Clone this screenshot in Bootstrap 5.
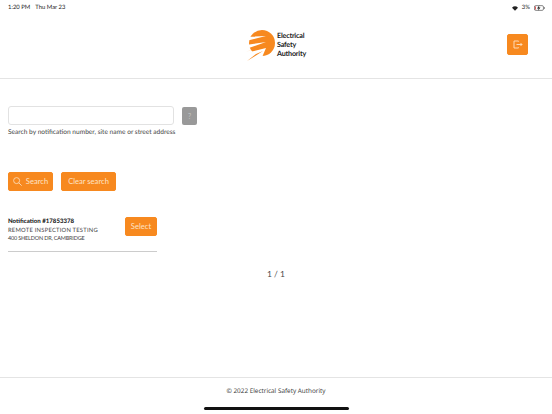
<!DOCTYPE html>
<html lang="en">
<head>
    <meta charset="UTF-8">
    <meta name="viewport" content="width=device-width, initial-scale=1.0">
    <title>Notification Search</title>
    <link href="https://cdn.jsdelivr.net/npm/bootstrap@5.3.0/dist/css/bootstrap.min.css" rel="stylesheet">
    <style>
        html, body { height: 100%; }
        body { font-family: "Lato", "Liberation Sans", sans-serif; color: #333; background: #fff; overflow: hidden; text-rendering: geometricPrecision; }
        .app-shell { height: 414px; width: 552px; }
        .app-head { height: 79px; border-bottom: 1px solid #e4e4e4; padding: 3px 7px 0 8px; }
        .status-row { height: 10px; font-size: 5.9px; line-height: 10px; color: #222; }
        .logo-row { height: 40px; margin-top: 16px; padding-right: 1px; }
        .logo-text { font-size: 7.2px; line-height: 8.7px; font-weight: 700; color: #222; letter-spacing: -.2px; }
        .btn-esa { background: #f7891f; border: 1px solid #f7891f; color: #fde3c6; border-radius: 2px; font-size: 7.6px; line-height: 1; padding: 0; display: inline-flex; align-items: center; justify-content: center; }
        .btn-exit { width: 21px; height: 21px; margin-right: 16px; margin-top: 5px; }
        .search-box { width: 166px; height: 18.5px; border: 1px solid #e2e2e2; border-radius: 3px; background: #fff; }
        .help-btn { width: 15px; height: 18px; background: #999; border-radius: 2px; color: #c4c4c4; font-size: 7px; margin-left: 8px; margin-top: 1px; }
        .hint-text { font-size: 6.6px; line-height: 9px; color: #444; margin-top: 3px; }
        .btn-row { margin-top: 35px; gap: 8px; }
        .btn-find { width: 45px; height: 19px; gap: 4px; }
        .btn-clear { width: 55px; height: 19px; }
        .notify-block { width: 149px; margin-top: 26px; border-bottom: 1px solid #ccc; padding-bottom: 7px; }
        .notify-title { font-size: 6.1px; font-weight: 900; line-height: 9px; color: #222; }
        .notify-line { line-height: 9px; color: #444; }
        .notify-site { font-size: 5.8px; letter-spacing: .24px; }
        .notify-addr { font-size: 5.5px; letter-spacing: -.18px; }
        .btn-select { width: 32px; height: 19px; }
        .pager-text { font-size: 8.5px; line-height: 10px; color: #444; margin-top: 17px; }
        .app-foot { height: 37px; border-top: 1px solid #e4e4e4; font-family: "Open Sans", sans-serif; font-size: 6.4px; color: #333; padding-top: 8px; position: relative; }
        .home-bar { position: absolute; left: 204px; top: 29px; width: 145px; height: 3px; background: #111; border-radius: 2px; }
    </style>
</head>
<body>
<div class="app-shell d-flex flex-column">
    <!-- Header -->
    <div class="app-head">
        <div class="status-row d-flex justify-content-between">
            <div class="d-flex gap-1"><span style="margin-right:1px">1:20 PM</span><span>Thu Mar 23</span></div>
            <div class="d-flex align-items-center gap-1">
                <svg width="6" height="5" viewBox="0 0 14 11"><path d="M7 11 0 3.500C4-.6 10-.6 14 3.500z" fill="#222"/></svg>
                <span>3%</span>
                <svg width="11" height="6" viewBox="0 0 14 7"><rect x=".5" y=".5" width="11.500" height="6" rx="1.600" fill="#fff" stroke="#666"/><rect x="12.600" y="2.300" width="1" height="2.400" fill="#666"/><rect x="1.500" y="1.500" width="1" height="4" fill="#d33"/><path d="M7 0 3.800 4H6L5 7l3.200-4H6z" fill="#111"/></svg>
            </div>
        </div>
        <div class="logo-row d-flex align-items-start">
            <div class="flex-grow-1 flex-shrink-1 w-100"></div>
            <div class="d-flex align-items-center flex-shrink-0">
                <svg width="31" height="33" viewBox="0 0 31 33">
                    <circle cx="16" cy="14" r="13" fill="#f7891f"/>
                    <path d="M20 7 0 8V12zM20 13 0 16V20zM20 19 0 24V33H14z" fill="#fff"/>
                    <path d="M17 22 1 32 10 25zM16 16 0 23 10 18.500z" fill="#f7891f"/>
                </svg>
                <div class="logo-text">Electrical<br>Safety<br>Authority</div>
            </div>
            <div class="flex-grow-1 flex-shrink-1 w-100 d-flex justify-content-end">
                <button class="btn-esa btn-exit" type="button">
                    <svg width="10" height="9" viewBox="0 0 10 9" fill="none" stroke="#fde3c6" stroke-width=".9"><path d="M5.500 1.500V1H1v7h4.500v-.5"/><path d="M3.500 4.500h5.500M7.500 3 9 4.500 7.500 6"/></svg>
                </button>
            </div>
        </div>
    </div>

    <!-- Search form and results -->
    <div class="flex-grow-1 px-2" style="padding-top:27px">
        <div class="d-flex align-items-start">
            <div class="search-box"></div>
            <button class="btn-esa help-btn border-0" type="button">?</button>
        </div>
        <div class="hint-text">Search by notification number, site name or street address</div>
        <div class="d-flex btn-row">
            <button class="btn-esa btn-find" type="button">
                <svg width="9" height="9" viewBox="0 0 9 9" fill="none" stroke="#fde3c6" stroke-width=".8"><circle cx="3.600" cy="3.600" r="3"/><path d="M5.800 5.800 8.700 8.700"/></svg>
                Search
            </button>
            <button class="btn-esa btn-clear" type="button">Clear search</button>
        </div>
        <div class="notify-block d-flex justify-content-between align-items-start">
            <div>
                <div class="notify-title">Notification #17853378</div>
                <div class="notify-line notify-site">REMOTE INSPECTION TESTING</div>
                <div class="notify-line notify-addr">400 SHELDON DR, CAMBRIDGE</div>
            </div>
            <button class="btn-esa btn-select" type="button">Select</button>
        </div>
        <div class="pager-text text-center">1 / 1</div>
    </div>

    <!-- Footer -->
    <div class="app-foot text-center">
        © 2022 Electrical Safety Authority
        <div class="home-bar"></div>
    </div>
</div>
<script src="https://cdn.jsdelivr.net/npm/bootstrap@5.3.0/dist/js/bootstrap.bundle.min.js"></script>
</body>
</html>
